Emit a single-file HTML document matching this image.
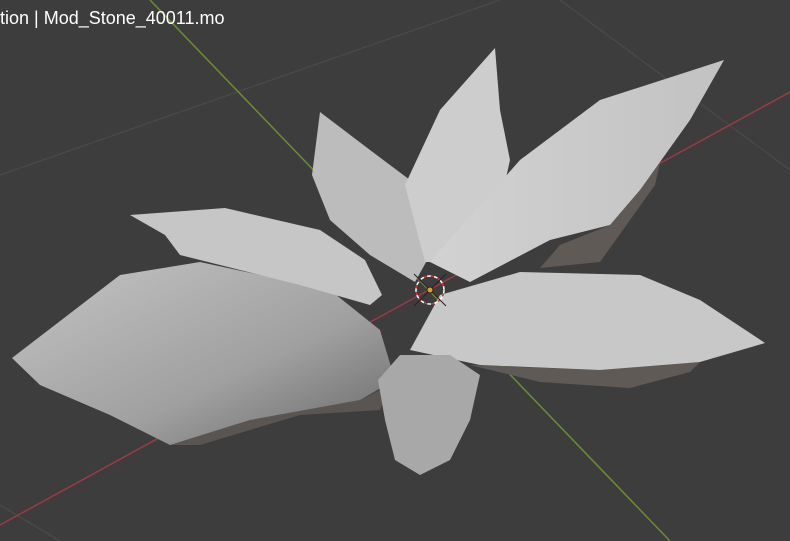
<!DOCTYPE html>
<html><head><style>
html,body{margin:0;padding:0;background:#3d3d3d;overflow:hidden}
.t{position:absolute;left:0;top:8px;color:#fff;font:18px "Liberation Sans",sans-serif;}
</style></head><body>
<svg width="790" height="541" viewBox="0 0 790 541" style="position:absolute;left:0;top:0">
<defs>
<linearGradient id="g1" x1="0" y1="0" x2="1" y2="1"><stop offset="0" stop-color="#c4c4c4"/><stop offset="0.6" stop-color="#a0a0a0"/><stop offset="1" stop-color="#666"/></linearGradient>
<linearGradient id="g2" x1="0" y1="0" x2="1" y2="0"><stop offset="0" stop-color="#d2d2d2"/><stop offset="1" stop-color="#c2c2c2"/></linearGradient>
</defs>
<rect width="790" height="541" fill="#3d3d3d"/>
<g stroke="#4a4a4a" stroke-width="1.2">
<line x1="0" y1="175" x2="500" y2="0"/>
<line x1="560" y1="0" x2="790" y2="170"/>
<line x1="0" y1="505" x2="60" y2="541"/>
</g>
<line x1="150" y1="0" x2="670" y2="541" stroke="#6a8d2e" stroke-width="1.5"/>
<line x1="0" y1="525" x2="790" y2="92" stroke="#9b3a44" stroke-width="1.5"/>
<g stroke="none">
<polygon points="560,245 610,225 640,190 665,140 655,185 600,262 540,268" fill="#5f5a55"/>
<polygon points="470,365 600,370 700,362 690,372 630,388 540,382" fill="#5f5a55"/>
<polygon points="170,445 250,420 360,400 390,385 380,410 300,415 200,445" fill="#5a5550"/>
<polygon points="12,358 120,275 200,262 330,290 380,330 395,380 360,400 250,420 170,445 110,415 40,385" fill="url(#g1)"/>
<polygon points="130,215 225,208 320,230 365,260 382,295 370,305 300,285 180,255 165,235" fill="#c6c6c6"/>
<polygon points="320,112 370,150 410,180 430,255 415,282 370,255 330,220 312,175" fill="#bcbcbc"/>
<polygon points="405,185 440,110 495,48 500,110 510,160 500,205 450,262 425,262" fill="#cdcdcd"/>
<polygon points="430,262 520,160 600,100 724,60 690,120 640,190 610,225 550,240 470,282" fill="url(#g2)"/>
<polygon points="410,350 440,295 520,272 640,275 700,300 765,343 700,362 600,370 480,365" fill="#c8c8c8"/>
<polygon points="378,380 400,355 450,355 480,375 470,420 450,460 420,475 395,460 385,420" fill="#a8a8a8"/>
</g>
<g transform="translate(430,290)">
<circle r="14" fill="none" stroke="#fff" stroke-width="1.5" stroke-dasharray="4 3"/>
<circle r="14" fill="none" stroke="#d33" stroke-width="1.5" stroke-dasharray="3 4" stroke-dashoffset="3.5"/>
<line x1="-16" y1="-16" x2="16" y2="16" stroke="#222" stroke-width="1"/>
<line x1="16" y1="-16" x2="-16" y2="16" stroke="#222" stroke-width="1"/>
<circle r="3" fill="#e8a020" stroke="#222" stroke-width="1"/>
</g>
</svg>
<div class="t">tion | Mod_Stone_40011.mo</div>
</body></html>
